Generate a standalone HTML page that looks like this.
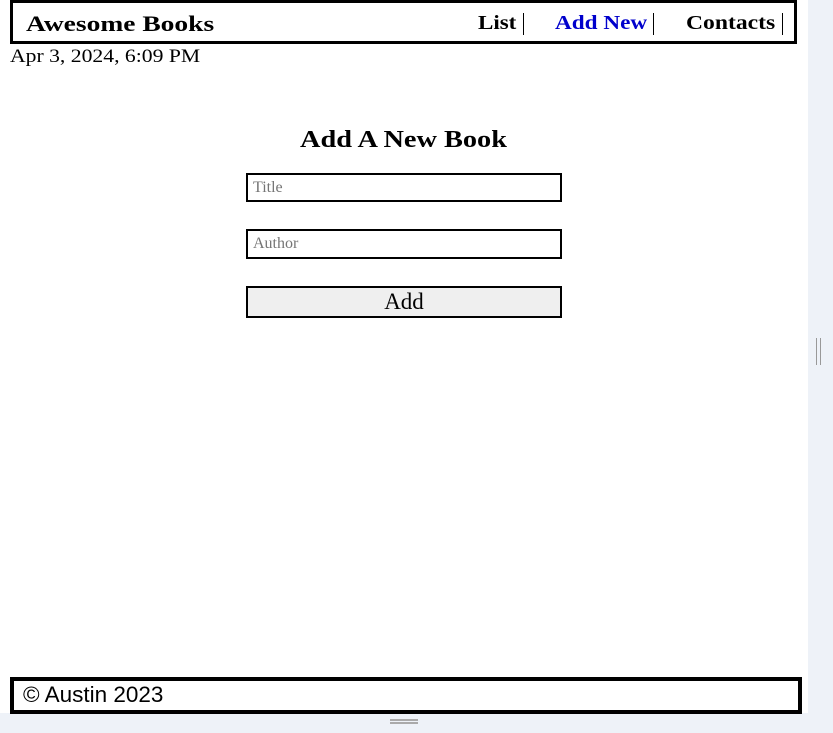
<!DOCTYPE html>
<html><head><style>
body{margin:0;width:833px;height:733px;background:#eef2f8;position:relative;overflow:hidden;font-family:"Liberation Serif",serif}
.main{position:absolute;left:0;top:0;width:808px;height:713px;background:#fff}
.hdr{position:absolute;left:10px;top:0;width:781px;height:38px;border:3px solid #000}
.s{display:inline-block;transform-origin:left center;white-space:nowrap}
.logo{position:absolute;left:13px;top:8px;font-weight:bold;font-size:22px}
.nav{position:absolute;top:9px;font-weight:bold;font-size:20px;line-height:22px}
.bar{position:absolute;top:10px;width:1px;height:22px;background:#000}
.date{position:absolute;left:10px;top:46px;font-size:19px}
h2{position:absolute;left:300px;top:127px;margin:0;font-size:24px}
.in{position:absolute;left:246px;border:2px solid #000;font-size:16px;color:#757575;box-sizing:border-box;padding:4px 5px}
.btn{position:absolute;left:246px;top:286px;width:316px;height:32px;box-sizing:border-box;border:2px solid #000;background:#efefef;text-align:center;font-size:23px;line-height:28px}
.ftr{position:absolute;left:10px;top:677px;height:29px;border:4px solid #000;font-family:"Liberation Sans",sans-serif;font-size:22.5px;line-height:28px;padding-left:9px;width:775px}
.sb{position:absolute;left:816px;top:338px;width:5px;height:27px;border-left:1px solid #999;border-right:1px solid #999;box-sizing:border-box}
.hb{position:absolute;left:390px;top:719px;width:28px;height:5px;border-top:2px solid #aaa;border-bottom:2px solid #aaa;box-sizing:border-box}
</style></head><body>
<div class="main">
<div class="hdr">
<div class="logo"><span class="s" style="transform:scaleX(1.25)">Awesome Books</span></div>
<div class="nav" style="left:465px"><span class="s" style="transform:scaleX(1.15)">List</span></div>
<div class="bar" style="left:510px"></div>
<div class="nav" style="left:542px;color:#0000cc"><span class="s" style="transform:scaleX(1.16)">Add New</span></div>
<div class="bar" style="left:640px"></div>
<div class="nav" style="left:673px"><span class="s" style="transform:scaleX(1.18)">Contacts</span></div>
<div class="bar" style="left:769px"></div>
</div>
<div class="date"><span class="s" style="transform:scaleX(1.14)">Apr 3, 2024, 6:09 PM</span></div>
<h2><span class="s" style="transform:scaleX(1.18)">Add A New Book</span></h2>
<div class="in" style="top:173px;width:316px;height:29px">Title</div>
<div class="in" style="top:229px;width:316px;height:30px">Author</div>
<div class="btn">Add</div>
<div class="ftr">© Austin 2023</div>
</div>
<div class="sb"></div>
<div class="hb"></div>
</body></html>
